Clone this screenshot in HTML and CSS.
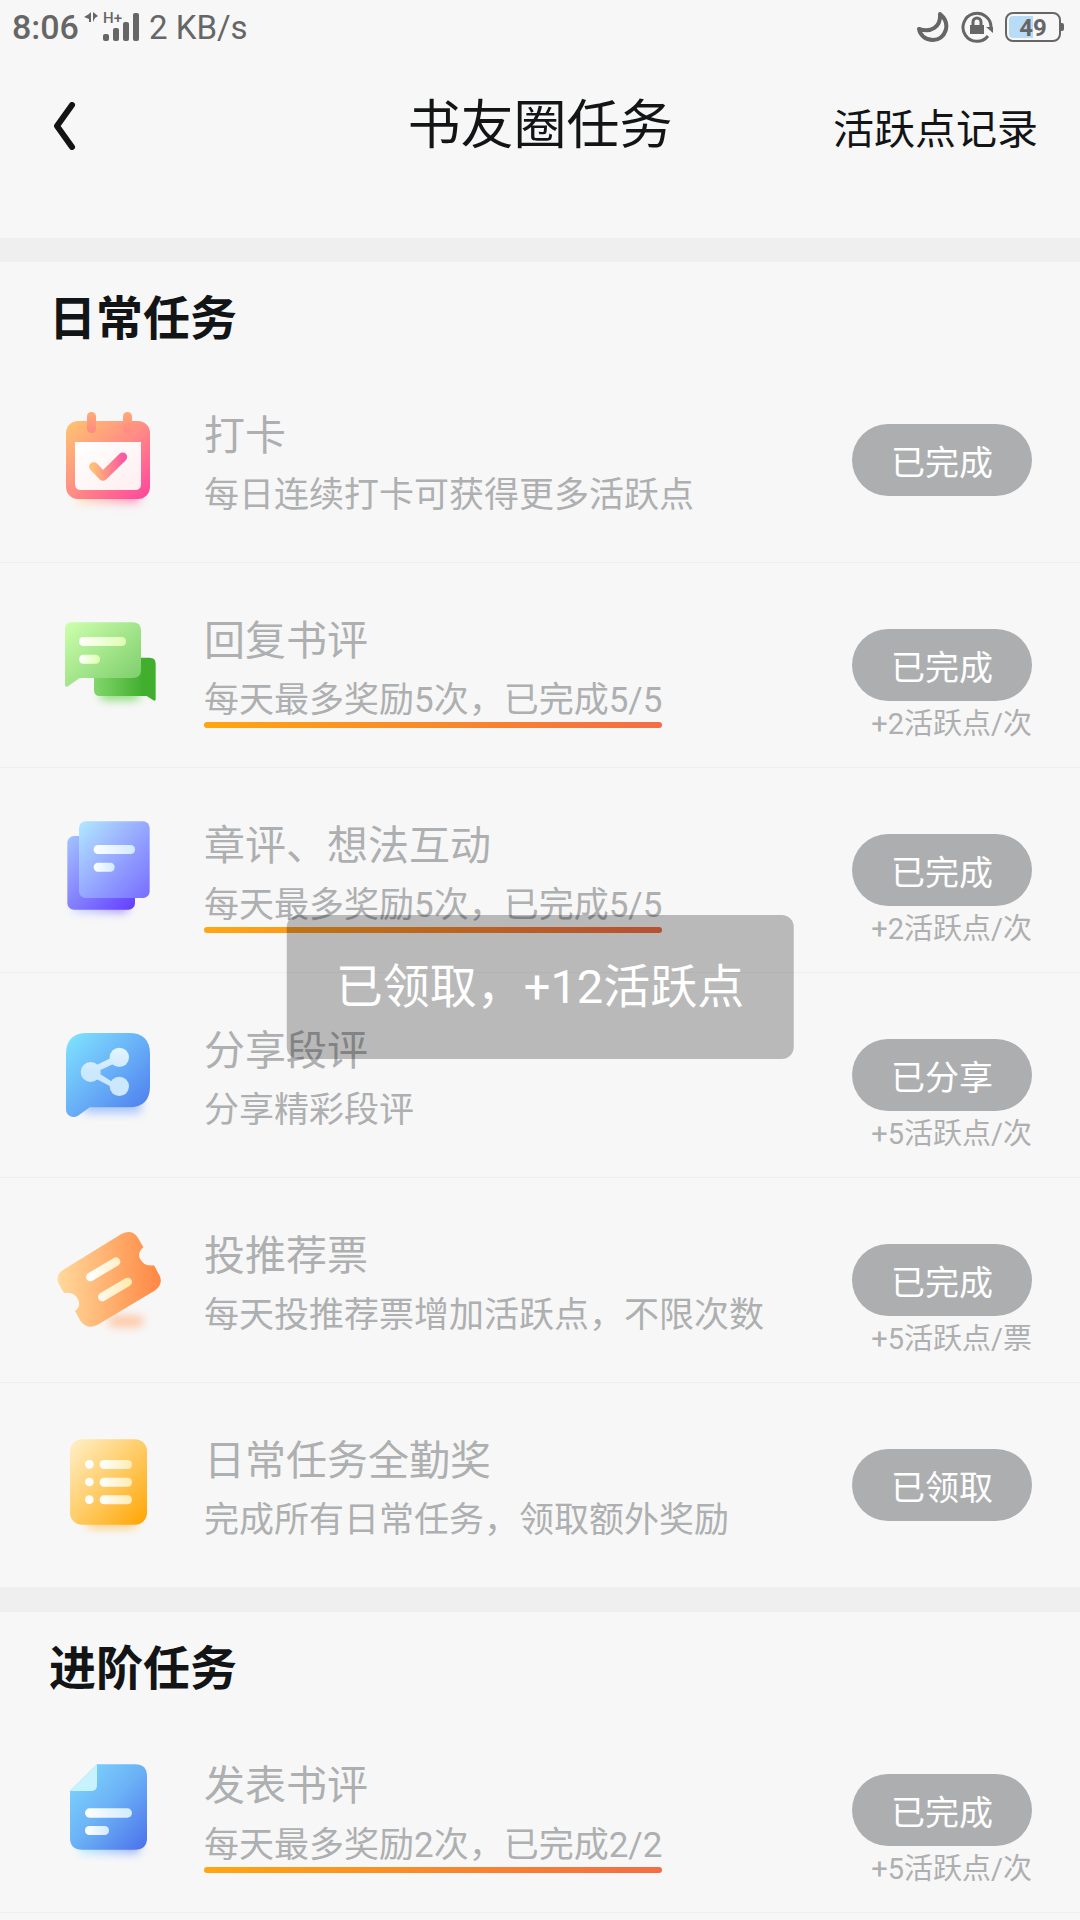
FILE: index.html
```html
<!DOCTYPE html>
<html lang="zh-CN">
  <head>
    <meta charset="UTF-8" />
    <meta name="viewport" content="width=device-width, initial-scale=1.0" />
    <title>书友圈任务</title>
    <link rel="stylesheet" href="styles.css">
  </head>
  <body>

    <div class="status-bar">
      <div class="status-left">
        <span class="time">8:06</span>
        <svg class="signal" width="56" height="32" viewBox="0 0 56 32" fill="#666">
          <path d="M7 1v10H5V8L0 6l5-3zM9 1l5 4-3 2-2 4z" />
          <text x="19" y="12" font-size="15" font-weight="500">H+</text>
          <rect x="19" y="23" width="6" height="7" rx="2" />
          <rect x="29" y="17" width="6" height="13" rx="2" />
          <rect x="39" y="11" width="6" height="19" rx="2" />
          <rect x="49" y="2" width="6" height="28" rx="2" />
        </svg>
        <span class="speed">2 KB/s</span>
      </div>
      <div class="status-right">
        <svg width="32" height="32" viewBox="0 0 32 32" fill="none" stroke="#666" stroke-width="4" stroke-linejoin="round">
          <path d="M23 3C35 13 28 29 16 29C8 29 3 24 2 18C14 22 24 16 23 3Z" />
        </svg>
        <svg width="32" height="32" viewBox="0 0 32 32" fill="none" stroke="#666" stroke-width="3">
          <path d="M27 25A14 14 0 1 1 30 17" />
          <path d="M25 16h7v6z" fill="#666" stroke="none" />
          <rect x="9" y="14" width="14" height="9" fill="#666" stroke="none" />
          <path d="M12 15v-4a4 4 0 0 1 8 0v4" />
        </svg>
        <div class="battery"><span>49</span></div>
      </div>
    </div>

    <header class="header">
      <button class="back-btn" aria-label="返回">
        <svg width="22" height="48" viewBox="0 0 22 48" fill="none" stroke="#121416" stroke-width="6" stroke-linecap="round" stroke-linejoin="round">
          <path d="M18 3L3 24L18 45" />
        </svg>
      </button>
      <h1>书友圈任务</h1>
      <a class="record-link" href="#">活跃点记录</a>
    </header>

    <section class="task-section">
      <h2>日常任务</h2>
      <ul class="task-list">
        <li class="task">
          <svg class="task-icon" viewBox="0 0 420 420">
            <defs>
              <linearGradient id="pink" x1="0" y1="0" x2="1" y2="1">
                <stop offset="0" stop-color="#ffc56f" />
                <stop offset="0.500" stop-color="#ff8c85" />
                <stop offset="1" stop-color="#ff439d" />
              </linearGradient>
              <linearGradient id="pinkTick" x1="0" y1="0" x2="1" y2="0">
                <stop offset="0" stop-color="#ffbd75" />
                <stop offset="1" stop-color="#f95aa0" />
              </linearGradient>
              <linearGradient id="pinkRing" x1="0" y1="0" x2="0" y2="1">
                <stop offset="0" stop-color="#ffac76" />
                <stop offset="1" stop-color="#ff8783" />
              </linearGradient>
              <linearGradient id="pinkPaper" x1="0" y1="0" x2="1" y2="1">
                <stop offset="0" stop-color="#fff" />
                <stop offset="1" stop-color="#ffeef0" />
              </linearGradient>
              <linearGradient id="pinkShadow">
                <stop offset="0" stop-color="#ffe3b5" />
                <stop offset="1" stop-color="#ff8bbd" />
              </linearGradient>
              <filter id="blur" x="-30%" y="-120%" width="160%" height="340%">
                <feGaussianBlur stdDeviation="14" />
              </filter>
            </defs>
            <rect x="110" y="300" width="190" height="38" rx="15" fill="url(#pinkShadow)" filter="url(#blur)" />
            <rect x="78" y="93" width="252" height="234" rx="36" fill="url(#pink)" />
            <path d="M105 156H303V282Q303 300 285 300H123Q105 300 105 282Z" fill="url(#pinkPaper)" />
            <rect x="141" y="66" width="27" height="63" rx="13" fill="url(#pinkRing)" />
            <rect x="249" y="66" width="27" height="63" rx="13" fill="url(#pinkRing)" />
            <path d="M161 230L189 259L248 201" fill="none" stroke="url(#pinkTick)" stroke-width="27" stroke-linecap="round" stroke-linejoin="round" />
          </svg>
          <div class="task-info">
            <h3>打卡</h3>
            <p>每日连续打卡可获得更多活跃点</p>
          </div>
          <div class="task-action">
            <button class="btn">已完成</button>
          </div>
        </li>

        <li class="task">
          <svg class="task-icon" viewBox="0 -15 420 420">
            <defs>
              <linearGradient id="green" x1="0" y1="0" x2="1" y2="1">
                <stop offset="0" stop-color="#ceffae" />
                <stop offset="1" stop-color="#78cb67" />
              </linearGradient>
              <linearGradient id="greenDark">
                <stop offset="0" stop-color="#83d66d" />
                <stop offset="0.800" stop-color="#41ae2e" />
              </linearGradient>
              <linearGradient id="greenLine">
                <stop offset="0" stop-color="#fff" />
                <stop offset="1" stop-color="#deffae" />
              </linearGradient>
            </defs>
            <rect x="180" y="270" width="120" height="30" rx="15" fill="#83dc70" filter="url(#blur)" />
            <path d="M162 173H329Q347 173 347 191V297Q347 305 340 301L320 288H180Q162 288 162 270Z" fill="url(#greenDark)" />
            <path d="M93 67H278Q303 67 303 92V210Q303 234 278 234H119L84 259Q75 263 75 254V87Q75 67 93 67Z" fill="url(#green)" />
            <rect x="117" y="111" width="141" height="27" rx="13" fill="url(#greenLine)" />
            <rect x="117" y="164" width="63" height="27" rx="13" fill="url(#greenLine)" />
          </svg>
          <div class="task-info">
            <h3>回复书评</h3>
            <p class="underlined">每天最多奖励5次，已完成5/5</p>
          </div>
          <div class="task-action">
            <button class="btn">已完成</button>
            <span class="reward">+2活跃点/次</span>
          </div>
        </li>

        <li class="task">
          <svg class="task-icon" viewBox="0 0 420 420">
            <defs>
              <linearGradient id="violet" x1="0" y1="0" x2="1" y2="1">
                <stop offset="0" stop-color="#b2e8ff" />
                <stop offset="0.500" stop-color="#96a8ff" />
                <stop offset="1" stop-color="#776dff" />
              </linearGradient>
              <linearGradient id="violetDark" x1="0" y1="0" x2="1" y2="1">
                <stop offset="0" stop-color="#a3c3ff" />
                <stop offset="1" stop-color="#633dff" />
              </linearGradient>
              <linearGradient id="coolLine">
                <stop offset="0" stop-color="#fff" />
                <stop offset="1" stop-color="#d2eaff" />
              </linearGradient>
              <linearGradient id="violetShadow">
                <stop offset="0" stop-color="#c9dcff" />
                <stop offset="1" stop-color="#9a85ff" />
              </linearGradient>
            </defs>
            <rect x="95" y="305" width="170" height="32" rx="15" fill="url(#violetShadow)" filter="url(#blur)" />
            <rect x="82" y="108" width="203" height="221" rx="20" fill="url(#violetDark)" />
            <rect x="117" y="64" width="212" height="230" rx="20" fill="url(#violet)" />
            <rect x="161" y="135" width="124" height="27" rx="13" fill="url(#coolLine)" />
            <rect x="161" y="188" width="63" height="27" rx="13" fill="url(#coolLine)" />
          </svg>
          <div class="task-info">
            <h3>章评、想法互动</h3>
            <p class="underlined">每天最多奖励5次，已完成5/5</p>
          </div>
          <div class="task-action">
            <button class="btn">已完成</button>
            <span class="reward">+2活跃点/次</span>
          </div>
        </li>

        <li class="task">
          <svg class="task-icon" viewBox="0 -15 420 420">
            <defs>
              <linearGradient id="blue" x1="0" y1="0" x2="1" y2="1">
                <stop offset="0" stop-color="#80e5ff" />
                <stop offset="0.500" stop-color="#68aff7" />
                <stop offset="1" stop-color="#4a78ed" />
              </linearGradient>
              <linearGradient id="share" gradientUnits="userSpaceOnUse" x1="0" y1="112" x2="0" y2="258">
                <stop offset="0" stop-color="#e4f5ff" />
                <stop offset="0.500" stop-color="#cce8ff" />
              </linearGradient>
            </defs>
            <rect x="130" y="270" width="175" height="40" rx="15" fill="#a9c6ff" filter="url(#blur)" />
            <path d="M141 69H267Q330 69 330 132V229Q330 292 267 292H149L114 317Q103 324 91 319Q78 313 78 298V132Q78 69 141 69Z" fill="url(#blue)" />
            <g fill="url(#share)">
              <path d="M232 134L152 174V198L232 240V225L180 192V181L240 152Z" />
              <circle cx="238" cy="142" r="29" />
              <circle cx="152" cy="186" r="30" />
              <circle cx="238" cy="229" r="29" />
            </g>
          </svg>
          <div class="task-info">
            <h3>分享段评</h3>
            <p>分享精彩段评</p>
          </div>
          <div class="task-action">
            <button class="btn">已分享</button>
            <span class="reward">+5活跃点/次</span>
          </div>
        </li>

        <li class="task">
          <svg class="task-icon" viewBox="0 0 420 420">
            <defs>
              <linearGradient id="orange" x1="0" y1="0" x2="1" y2="0">
                <stop offset="0" stop-color="#ffd99b" />
                <stop offset="1" stop-color="#ff8743" />
              </linearGradient>
              <linearGradient id="warmLine">
                <stop offset="0" stop-color="#fff" />
                <stop offset="1" stop-color="#ffebb3" />
              </linearGradient>
            </defs>
            <rect x="205" y="318" width="105" height="32" rx="15" fill="#ffc4a0" filter="url(#blur)" />
            <path d="M70 179L244 72Q275 56 293 82L310 112Q293 126 299 144Q311 171 342 166L359 197Q370 221 346 241L172 345Q141 360 121 332L105 303Q123 290 115 270Q104 243 72 249L56 221Q45 196 70 179Z" fill="url(#orange)" />
            <path d="M151 201L228 155M187 261L263 216" stroke="url(#warmLine)" stroke-width="26" stroke-linecap="round" />
          </svg>
          <div class="task-info">
            <h3>投推荐票</h3>
            <p>每天投推荐票增加活跃点，不限次数</p>
          </div>
          <div class="task-action">
            <button class="btn">已完成</button>
            <span class="reward">+5活跃点/票</span>
          </div>
        </li>

        <li class="task">
          <svg class="task-icon" viewBox="0 -15 420 420">
            <defs>
              <linearGradient id="yellow" x1="0" y1="0" x2="1" y2="1">
                <stop offset="0" stop-color="#fff0c9" />
                <stop offset="0.500" stop-color="#ffcc67" />
                <stop offset="1" stop-color="#ffa400" />
              </linearGradient>
            </defs>
            <rect x="140" y="294" width="150" height="30" rx="15" fill="#ffcd7c" filter="url(#blur)" />
            <rect x="90" y="58" width="231" height="256" rx="36" fill="url(#yellow)" />
            <g fill="#fff">
              <circle cx="148" cy="133" r="13" />
              <circle cx="148" cy="186" r="13" />
              <circle cx="148" cy="239" r="13" />
            </g>
            <g fill="url(#warmLine)">
              <rect x="179" y="120" width="97" height="27" rx="13" />
              <rect x="179" y="173" width="97" height="27" rx="13" />
              <rect x="179" y="226" width="97" height="27" rx="13" />
            </g>
          </svg>
          <div class="task-info">
            <h3>日常任务全勤奖</h3>
            <p>完成所有日常任务，领取额外奖励</p>
          </div>
          <div class="task-action">
            <button class="btn">已领取</button>
          </div>
        </li>
      </ul>
    </section>

    <section class="task-section">
      <h2>进阶任务</h2>
      <ul class="task-list">
        <li class="task">
          <svg class="task-icon" viewBox="0 0 420 420">
            <defs>
              <linearGradient id="doc" x1="0" y1="0" x2="1" y2="1">
                <stop offset="0" stop-color="#80daff" />
                <stop offset="0.500" stop-color="#6bb1f6" />
                <stop offset="1" stop-color="#4b70eb" />
              </linearGradient>
              <linearGradient id="docShadow">
                <stop offset="0" stop-color="#b9efff" />
                <stop offset="1" stop-color="#8ea8ff" />
              </linearGradient>
            </defs>
            <rect x="115" y="306" width="185" height="34" rx="15" fill="url(#docShadow)" filter="url(#blur)" />
            <path d="M171 73H285Q321 73 321 109V293Q321 329 285 329H126Q90 329 90 293V153Z" fill="url(#doc)" />
            <path d="M171 73V135Q171 153 153 153H90Z" fill="#c7f3ff" />
            <rect x="135" y="205" width="141" height="28" rx="14" fill="url(#coolLine)" />
            <rect x="135" y="258" width="72" height="27" rx="13" fill="url(#coolLine)" />
          </svg>
          <div class="task-info">
            <h3>发表书评</h3>
            <p class="underlined">每天最多奖励2次，已完成2/2</p>
          </div>
          <div class="task-action">
            <button class="btn">已完成</button>
            <span class="reward">+5活跃点/次</span>
          </div>
        </li>
      </ul>
    </section>

    <div class="toast" role="status">已领取，+12活跃点</div>
  </body>
</html>
```

FILE: styles.css
```css
* {
  margin: 0;
  padding: 0;
  box-sizing: border-box;
  font-family: Roboto, "Noto Sans CJK SC", sans-serif;
}
body {
  background-color: #f7f7f7;
  color: #121416;
}
button {
  border: none;
  background: none;
  cursor: pointer;
}


.status-bar {
  display: flex;
  justify-content: space-between;
  align-items: center;
  height: 54px;
  padding: 0 15px 0 12px;
  color: #666;
}
.status-left,
.status-right {
  display: flex;
  align-items: center;
}
.time {
  font-size: 34px;
  font-weight: 500;
}
.signal {
  margin: 0 9px 0 5px;
  overflow: visible;
}
.speed {
  font-size: 33px;
}
.status-right {
  gap: 12px;
}
.battery {
  position: relative;
  width: 56px;
  height: 30px;
  margin-right: 4px;
  border: 2px solid #666;
  border-radius: 8px;
  padding: 2px;
  background: linear-gradient(90deg, #b8dcf8 24px, transparent 24px) content-box;
  text-align: center;
}
.battery::after {
  content: "";
  position: absolute;
  right: -5px;
  top: 9px;
  width: 3px;
  height: 8px;
  border-radius: 0 2px 2px 0;
  background: #666;
}
.battery span {
  display: block;
  font-size: 24px;
  font-weight: 700;
  line-height: 24px;
}


.header {
  display: grid;
  grid-template-columns: 1fr auto 1fr;
  align-items: center;
  height: 184px;
  padding: 0 42px 40px;
}
.back-btn {
  justify-self: start;
  display: flex;
  margin-left: 12px;
}
.header h1 {
  font-size: 53px;
  font-weight: 400;
  line-height: 76px;
}
.record-link {
  justify-self: end;
  color: #121416;
  font-size: 41px;
  text-decoration: none;
}


.task-section {
  border-top: 24px solid #efefef;
}
.task-section h2 {
  height: 96px;
  padding: 16px 49px 0;
  font-size: 47px;
  font-weight: 700;
  line-height: 82px;
}
.task-list {
  list-style: none;
}
.task {
  display: flex;
  align-items: flex-start;
  height: 205px;
  padding: 0 48px 0 40px;
  border-bottom: 1px solid #efefef;
}
.task-icon {
  width: 140px;
  height: 140px;
  margin: 32px 24px 0 0;
  flex-shrink: 0;
}
.task-info {
  flex: 1;
  padding-top: 54px;
  color: #aeafb0;
}
.task-info h3 {
  font-size: 41px;
  font-weight: 400;
  line-height: 48px;
}
.task-info p {
  width: fit-content;
  margin-top: 12px;
  font-size: 35px;
  line-height: 48px;
}
.task-info .underlined::after {
  content: "";
  display: block;
  height: 6px;
  margin-top: -3px;
  border-radius: 3px;
  background: linear-gradient(90deg, #ffa60f, #f46c45);
}
.task-action {
  display: flex;
  flex-direction: column;
  align-items: flex-end;
  padding-top: 66px;
}
.btn {
  width: 180px;
  height: 72px;
  border-radius: 36px;
  background: #adaeb0;
  color: white;
  font-size: 34px;
}
.reward {
  color: #aeafb0;
  font-size: 29px;
  line-height: 46px;
}


.toast {
  position: absolute;
  top: 915px;
  left: 50%;
  transform: translateX(-50%);
  padding: 0 49px;
  border-radius: 12px;
  background: rgba(0, 0, 0, 0.25);
  color: white;
  font-size: 47px;
  line-height: 144px;
  white-space: nowrap;
}
```
